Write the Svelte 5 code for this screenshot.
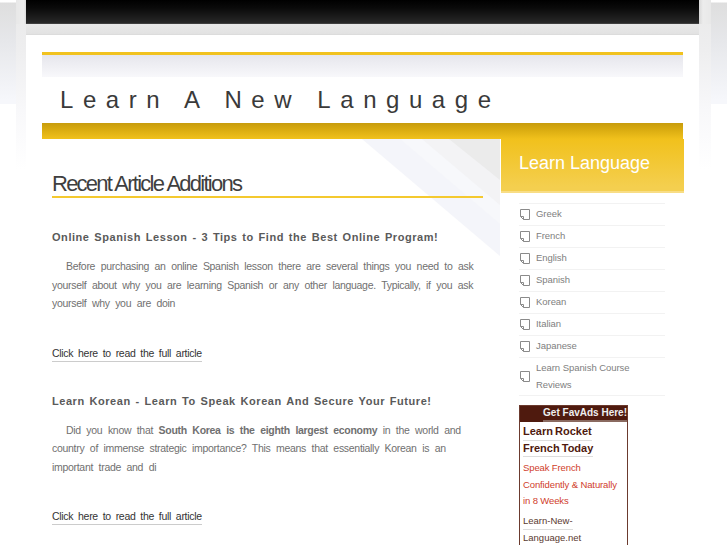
<script lang="ts">
  const languages = ["Greek", "French", "English", "Spanish", "Korean", "Italian", "Japanese", "Learn Spanish Course Reviews"];
</script>

<div class="page">
  <div class="topbar"></div>
  <div class="shell">
    <div class="card">
      <header class="masthead">
        <div class="fade"></div>
        <h1>Learn A New Language</h1>
        <div class="band"></div>
      </header>

      <div class="columns">
        <main class="content">
          <svg class="swoosh" width="139" height="118" viewBox="0 0 139 118" aria-hidden="true">
            <polygon points="0,0 138,0 138,117" fill="#f4f5fa" />
            <polygon points="38,0 138,0 138,85" fill="#f7f8fb" />
            <polygon points="60,0 138,0 138,66" fill="#f3f3f5" />
            <polygon points="87,0 138,0 138,41" fill="#ebebeb" />
          </svg>

          <h2>Recent Article Additions</h2>

          <article>
            <h3>Online Spanish Lesson - 3 Tips to Find the Best Online Program!</h3>
            <p>
              <span class="indent"></span>Before purchasing an online Spanish lesson there are several things you need to ask yourself about why you are learning Spanish or any other language. Typically, if you ask yourself why you are doin
            </p>
            <a href="#top">Click here to read the full article</a>
          </article>

          <article>
            <h3>Learn Korean - Learn To Speak Korean And Secure Your Future!</h3>
            <p>
              <span class="indent"></span>Did you know that <strong>South Korea is the eighth largest economy</strong> in the world and country of immense strategic importance? This means that essentially Korean is an important trade and di
            </p>
            <a href="#top">Click here to read the full article</a>
          </article>
        </main>

        <aside class="sidebar">
          <div class="side-title">Learn Language</div>
          <ul>
            {#each languages as lang}
              <li>
                <svg width="10" height="11" viewBox="0 0 10 11" aria-hidden="true">
                  <path d="M.5.5h9v10h-6l-3-3zM.5 7.500h3v3" fill="none" stroke="#8a8a8a" />
                </svg>
                <span>{lang}</span>
              </li>
            {/each}
          </ul>

          <div class="ad">
            <div class="ad-head"><span>Get FavAds Here!</span></div>
            <div class="ad-body">
              <div class="ad-title"><span>Learn Rocket</span><br /><span>French Today</span></div>
              <p>Speak French Confidently &amp; Naturally in 8 Weeks</p>
              <div class="ad-link"><span>Learn-New-</span><br /><span>Language.net</span></div>
            </div>
          </div>
        </aside>
      </div>
    </div>
  </div>
</div>

<style>
  :global(body) {
    margin: 0;
    background-color: #fff;
    background-image:
      linear-gradient(180deg, #fff 0, #fff 2px, #dedede 3px, #e6e7ea 40px, #f6f7fb 100px),
      linear-gradient(180deg, #fff 0, #fff 2px, #dedede 3px, #e6e7ea 40px, #f6f7fb 100px),
      linear-gradient(90deg, #e8e8e8, #ececec 8px, #d8d8d8),
      linear-gradient(90deg, #d8d8d8, #ececec 4px, #e8e8e8),
      linear-gradient(180deg, #e9e9e9 0, #eeeeef 50px, #f8f8fa 110px, #fff 170px),
      linear-gradient(180deg, #e9e9e9 0, #eeeeef 50px, #f8f8fa 110px, #fff 170px);
    background-repeat: no-repeat;
    background-size: 16px 104px, 16px 104px, 10px 24px, 12px 24px, 10px 170px, 12px 170px;
    background-position: 0 0, 711px 0, 16px 0, 699px 0, 16px 0, 699px 0;
    font-family: "Liberation Sans", Arial, sans-serif;
    overflow: hidden;
  }

  .page {
    width: 673px;
    margin-left: 26px;
    height: 545px;
    overflow: hidden;
  }

  .topbar {
    height: 24px;
    background: linear-gradient(180deg, #000 0, #0a0a0a 8px, #282828 23px, #555 24px);
  }

  .shell {
    padding-top: 10px;
    background: linear-gradient(180deg, #e9e9e9 0, #e2e2e2 10px);
  }

  .card {
    background: #fff;
    padding: 17px 15px 0 16px;
    border-top: 1px solid #dcdcdc;
  }

  .masthead {
    width: 641px;
    border-top: 3px solid #f1c21f;
  }

  .fade {
    height: 22px;
    background: linear-gradient(180deg, #e6e6ec, #f8f8fb);
  }

  h1 {
    margin: 0;
    height: 46px;
    padding-left: 18px;
    font-size: 24px;
    line-height: 46px;
    font-weight: 400;
    letter-spacing: 9.55px;
    color: #3a3a3a;
  }

  .band {
    height: 16px;
    background: linear-gradient(180deg, #c79c0d 0, #d8aa10 6px, #f1c11c 16px);
  }

  .columns {
    display: flex;
    width: 642px;
  }

  .content {
    position: relative;
    width: 459px;
    box-sizing: border-box;
    padding: 33px 18px 0 10px;
  }

  .swoosh {
    position: absolute;
    top: 0;
    left: 320px;
  }

  h2 {
    position: relative;
    margin: 0 0 30px;
    height: 24px;
    border-bottom: 2px solid #f4c92f;
    font-size: 22px;
    line-height: 24px;
    font-weight: 400;
    letter-spacing: -1.75px;
    color: #3f3f3f;
  }

  article {
    position: relative;
    margin-bottom: 30px;
  }

  h3 {
    margin: 0 0 11px;
    font-size: 11px;
    line-height: 18px;
    letter-spacing: 0.55px;
    word-spacing: 1.2px;
    color: #5a5a5a;
  }

  p {
    margin: 0;
  }

  article p {
    margin-bottom: 30px;
    font-size: 10.5px;
    line-height: 18.500px;
    letter-spacing: -0.3px;
    word-spacing: 2.9px;
    color: #707070;
  }

  .indent {
    display: inline-block;
    width: 14px;
  }

  article a {
    display: inline-block;
    line-height: 15px;
    border-bottom: 1px solid #ccc;
    font-size: 10.5px;
    letter-spacing: -0.3px;
    word-spacing: 2.2px;
    color: #333;
    text-decoration: none;
  }

  .sidebar {
    width: 183px;
    flex-shrink: 0;
  }

  .side-title {
    height: 54px;
    box-sizing: border-box;
    padding: 12px 18px 0;
    background: linear-gradient(180deg, #f1c11c 0, #f4cf4f 48px);
    border-bottom: 2px solid #f8dd85;
    font-size: 18px;
    line-height: 24px;
    color: #fff;
  }

  ul {
    list-style: none;
    width: 146px;
    margin: 10px 0 9px 18px;
    padding: 0;
    border-top: 1px solid #f2f2f2;
  }

  li {
    display: flex;
    align-items: center;
    gap: 6px;
    min-height: 21px;
    border-bottom: 1px solid #f2f2f2;
    padding: 0 1px;
    font-size: 9.5px;
    line-height: 16.500px;
    letter-spacing: -0.05px;
    color: #808080;
  }

  li:last-child {
    padding: 2px 1px;
  }

  li svg {
    flex-shrink: 0;
  }

  .ad {
    width: 109px;
    margin-left: 18px;
    box-sizing: border-box;
    border: 1px solid #6b3a2e;
    padding-bottom: 30px;
  }

  .ad-head {
    height: 16px;
    background: #4f1a0e;
    text-align: right;
    font-size: 10px;
    font-weight: 700;
    line-height: 14px;
    color: #eee;
  }

  .ad-head span {
    display: inline-block;
    border-bottom: 2px solid #8a6a60;
  }

  .ad-body {
    padding: 2px 3px;
  }

  .ad-title span,
  .ad-link span {
    display: inline-block;
    border-bottom: 1px solid #ddd;
  }

  .ad-title {
    font-size: 11px;
    font-weight: 700;
    line-height: 15.500px;
    word-spacing: -1px;
    color: #4f1a0e;
  }

  .ad-body p {
    margin: 3px 0;
    font-size: 9.5px;
    line-height: 16.500px;
    letter-spacing: -0.12px;
    color: #d0402c;
  }

  .ad-link {
    font-size: 9.5px;
    line-height: 16px;
    color: #5a3a30;
  }
</style>
